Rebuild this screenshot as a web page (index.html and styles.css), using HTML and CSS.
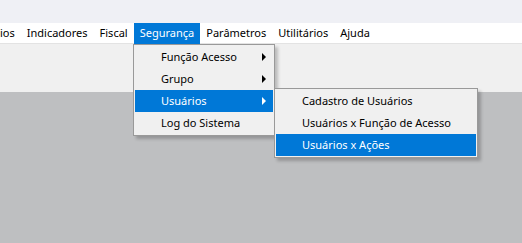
FILE: index.html
```html
<!DOCTYPE html>
<html lang="pt-BR">
<head>
    <meta charset="UTF-8">
    <title>Sistema</title>
    <link rel="stylesheet" href="styles.css">
</head>
<body>
<div class="window">
    <div class="titlebar"></div>
    <div class="menubar">
        <span class="menu-item first">ios</span>
        <span class="menu-item">Indicadores</span>
        <span class="menu-item">Fiscal</span>
        <span class="menu-item active">Segurança</span>
        <span class="menu-item">Parâmetros</span>
        <span class="menu-item">Utilitários</span>
        <span class="menu-item">Ajuda</span>
    </div>
    <div class="toolbar"></div>
    <div class="workspace"></div>

    <div class="dropdown dropdown-main">
        <div class="dropdown-row has-sub">Função Acesso</div>
        <div class="dropdown-row has-sub">Grupo</div>
        <div class="dropdown-row has-sub selected">Usuários</div>
        <div class="dropdown-row">Log do Sistema</div>
    </div>

    <div class="dropdown dropdown-sub">
        <div class="dropdown-row">Cadastro de Usuários</div>
        <div class="dropdown-row">Usuários x Função de Acesso</div>
        <div class="dropdown-row selected">Usuários x Ações</div>
    </div>
</div>
</body>
</html>
```

FILE: styles.css
```css
body {
    margin: 0;
    font-family: "Noto Sans", "Liberation Sans", sans-serif;
    font-size: 11px;
    color: #000;
}

.window {
    position: relative;
    width: 522px;
    height: 243px;
    display: flex;
    flex-direction: column;
    overflow: hidden;
    background-color: #bebfc1;
}

.titlebar {
    height: 23px;
    background-color: #eff0f5;
}

.menubar {
    display: flex;
    height: 20px;
    background-color: #ffffff;
    border-bottom: 1px solid #e3e3e3;
}

.menu-item {
    padding: 0 6px;
    line-height: 20px;
    white-space: nowrap;
}

.menu-item.first {
    padding-left: 0;
}

.menu-item.active {
    background-color: #0078d7;
    color: #ffffff;
    height: 21px;
}

.toolbar {
    height: 48px;
    background-color: #f0f0f0;
}

.workspace {
    flex: 1;
}

.dropdown {
    position: absolute;
    background-color: #f0f0f0;
    border: 1px solid #999999;
    padding: 1px;
    box-shadow: 3px 3px 3px rgba(0, 0, 0, 0.22);
}

.dropdown-main {
    left: 133px;
    top: 44px;
    width: 138px;
}

.dropdown-sub {
    left: 274px;
    top: 88px;
    width: 200px;
}

.dropdown-row {
    position: relative;
    height: 22px;
    line-height: 22px;
    padding-left: 26px;
    white-space: nowrap;
}

.dropdown-row.selected {
    background-color: #0078d7;
    color: #ffffff;
}

.has-sub::after {
    content: "";
    position: absolute;
    right: 7px;
    top: 7px;
    border-top: 4px solid transparent;
    border-bottom: 4px solid transparent;
    border-left: 4px solid #000000;
}

.has-sub.selected::after {
    border-left-color: #ffffff;
}
```
